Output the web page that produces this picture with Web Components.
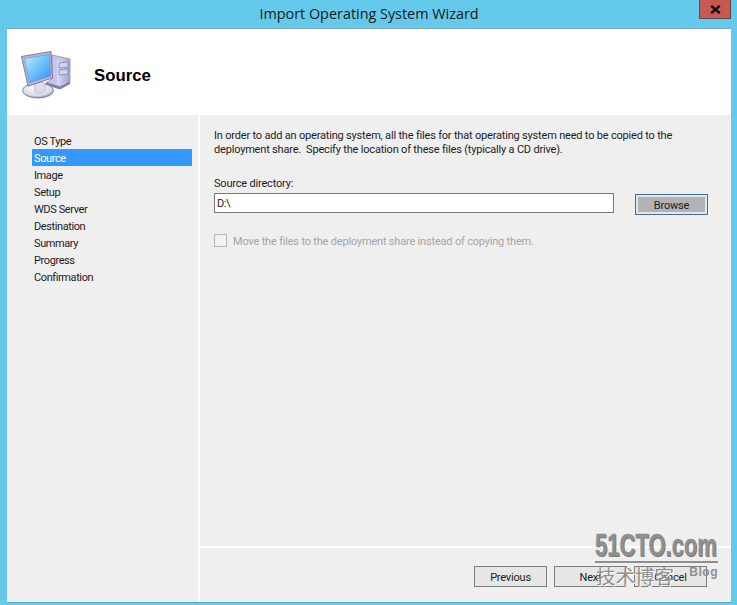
<!DOCTYPE html>
<html lang="en">
<head>
<meta charset="utf-8">
<title>Import Operating System Wizard</title>
<style>
  html, body { margin: 0; padding: 0; height: 100%; }
  body { background: #65c9eb; font-family: Roboto, "Liberation Sans", Arial, sans-serif; overflow: hidden; }
</style>
</head>
<body>
<wizard-window heading="Import Operating System Wizard">
  <wizard-header slot="header" heading="Source"></wizard-header>
  <wizard-nav slot="nav" items="OS Type,Source,Image,Setup,WDS Server,Destination,Summary,Progress,Confirmation" active="Source"></wizard-nav>
  <source-page slot="content"></source-page>
  <wizard-footer slot="footer"></wizard-footer>
</wizard-window>
<blog-watermark></blog-watermark>

<script>
// Native web components for the wizard dialog

class WizardWindow extends HTMLElement {
  constructor() {
    super();
    this.attachShadow({ mode: 'open' });
    this.shadowRoot.innerHTML = /*html*/`
      <style>
        :host {
          display: flex;
          flex-direction: column;
          width: 737px;
          height: 605px;
          box-sizing: border-box;
          padding: 0 6px 2px 7px;
          color: #000;
        }
        .titlebar {
          display: grid;
          grid-template-columns: 1fr auto 1fr;
          height: 28px;
          flex: none;
          border-bottom: 1px solid #7fa9b8;
        }
        .title {
          grid-column: 2;
          font: 14.4px/28px "Open Sans", "Liberation Sans", sans-serif;
          color: #1a1a1a;
          white-space: nowrap;
        }
        .close {
          grid-column: 3;
          justify-self: end;
          width: 30px;
          height: 18px;
          background: #c65a50;
          border: 1px solid #5a4a50;
          border-top: 0;
          display: flex;
          align-items: center;
          justify-content: center;
        }
        .body {
          flex: 1;
          display: flex;
          flex-direction: column;
          min-height: 0;
          border-bottom: 1px solid #4faecf;
        }
        .main {
          flex: 1;
          display: grid;
          grid-template-columns: 191px 1fr;
          grid-template-rows: 1fr 54px;
          gap: 0;
          min-height: 0;
          background: #fff;
        }
        .nav { grid-row: 1 / 3; background: #efefef; }
        .content { background: #efefef; margin-left: 2px; margin-bottom: 2px; }
        .footer { background: #efefef; margin-left: 2px; }
      </style>
      <div class="titlebar">
        <div class="title"></div>
        <div class="close">
          <svg width="11" height="9" viewBox="0 0 11 9"><path d="M1.2 .8 9.8 8.2M9.8 .8 1.2 8.2" stroke="#111" stroke-width="2.4" fill="none"/></svg>
        </div>
      </div>
      <div class="body">
        <slot name="header"></slot>
        <div class="main">
          <div class="nav"><slot name="nav"></slot></div>
          <div class="content"><slot name="content"></slot></div>
          <div class="footer"><slot name="footer"></slot></div>
        </div>
      </div>
    `;
    this.shadowRoot.querySelector('.title').textContent = this.getAttribute('heading');
  }
}

class WizardHeader extends HTMLElement {
  constructor() {
    super();
    this.attachShadow({ mode: 'open' });
    this.shadowRoot.innerHTML = /*html*/`
      <style>
        :host {
          display: flex;
          align-items: center;
          height: 86px;
          background: #fff;
          box-sizing: border-box;
          padding: 6px 0 0 12px;
        }
        svg { display: block; flex: none; }
        h1 {
          margin: 2px 0 0 23px;
          font: bold 16.8px "Liberation Sans", Arial, sans-serif;
          color: #000;
        }
      </style>
      <svg width="52" height="50" viewBox="0 0 52 50">
        <defs>
          <linearGradient id="scr" x1="0" y1="0" x2="1" y2="1">
            <stop offset="0" stop-color="#c4ecfd"/>
            <stop offset=".5" stop-color="#6cc2fb"/>
            <stop offset="1" stop-color="#3a8cf0"/>
          </linearGradient>
          <linearGradient id="tower" x1="0" y1="0" x2="1" y2="0">
            <stop offset="0" stop-color="#dcdcf6"/>
            <stop offset="1" stop-color="#9c9cd6"/>
          </linearGradient>
          <radialGradient id="base" cx=".45" cy=".35" r=".7">
            <stop offset="0" stop-color="#fff"/>
            <stop offset=".7" stop-color="#d9d9ea"/>
            <stop offset="1" stop-color="#77779f"/>
          </radialGradient>
        </defs>
        <!-- tower -->
        <path d="M33 5 51 9 51 32 41 38 27 33 33 29Z" fill="#c5c5ea" stroke="#7f7fb2" stroke-width=".7"/>
        <path d="M38 10 51 9 51 32 38 35Z" fill="url(#tower)"/>
        <path d="M40 13 49 12 49 17 40 18ZM40 20 49 19 49 24 40 25Z" fill="#d2d2f0" stroke="#6f6fa8" stroke-width=".6"/>
        <rect x="46.5" y="28" width="2.2" height="1.8" fill="#7fdc70"/>
        <path d="M27 32 41 36.5 51 31.5 51 34 41 39.5 27 35Z" fill="#7f7fb0"/>
        <!-- base -->
        <ellipse cx="19" cy="40.5" rx="15.5" ry="7.5" fill="url(#base)" stroke="#6f6f9c" stroke-width=".8"/>
        <path d="M15 31 26 33 26 40C24 44 18 44 16 42Z" fill="#dcdcec" stroke="#9a9ab8" stroke-width=".5"/>
        <!-- monitor -->
        <path d="M2.5 6.5 32 1.5 33.5 28 9 36Z" fill="#b9b9d6" stroke="#6f6f9c" stroke-width=".9"/>
        <path d="M5.5 8.5 30.5 4.5 31.5 26 10.5 32.5Z" fill="url(#scr)" stroke="#4f7fc4" stroke-width=".5"/>
      </svg>
      <h1></h1>
    `;
    this.shadowRoot.querySelector('h1').textContent = this.getAttribute('heading');
  }
}

class WizardNav extends HTMLElement {
  constructor() {
    super();
    this.attachShadow({ mode: 'open' });
    const active = this.getAttribute('active');
    const rows = this.getAttribute('items').split(',').map(item =>
      `<li class="${item === active ? 'active' : ''}">${item}</li>`).join('');
    this.shadowRoot.innerHTML = /*html*/`
      <style>
        :host { display: block; padding: 17px 6px 0 25px; }
        ul { list-style: none; margin: 0; padding: 0; }
        li {
          height: 17px;
          padding-left: 2px;
          font: 11px/19px Roboto, "Liberation Sans", Arial, sans-serif;
          letter-spacing: -.4px;
          color: #1c1c1c;
        }
        li.active { background: #3399ff; color: #fff; }
      </style>
      <ul>${rows}</ul>
    `;
  }
}

class SourcePage extends HTMLElement {
  constructor() {
    super();
    this.attachShadow({ mode: 'open' });
    this.shadowRoot.innerHTML = /*html*/`
      <style>
        :host {
          display: block;
          padding: 14px 22px 0 14px;
          font: 11px/14px Roboto, "Liberation Sans", Arial, sans-serif;
          letter-spacing: -.19px;
          color: #1c1c1c;
        }
        p { margin: 0 0 20px; width: 480px; }
        label { display: block; margin-bottom: 2px; }
        .row { display: flex; align-items: flex-start; gap: 21px; margin-bottom: 19px; }
        .input {
          width: 400px;
          height: 20px;
          box-sizing: border-box;
          background: #fff;
          border: 1px solid #7a7a7a;
          padding-left: 2px;
          font: 11px/19px Roboto, "Liberation Sans", Arial, sans-serif;
          letter-spacing: -.5px;
        }
        .row wizard-button { margin-top: 1px; }
        .check { display: flex; align-items: flex-start; gap: 6px; color: #a5a5a5; line-height: 15px; }
        .box {
          width: 13px;
          height: 13px;
          box-sizing: border-box;
          background: #f2f2f2;
          border: 1px solid #b5b5b5;
        }
      </style>
      <p>In order to add an operating system, all the files for that operating system need to be copied to the deployment share.&nbsp; Specify the location of these files (typically a CD drive).</p>
      <label>Source directory:</label>
      <div class="row">
        <div class="input">D:\\</div>
        <wizard-button focused>Browse</wizard-button>
      </div>
      <div class="check"><span class="box"></span><span>Move the files to the deployment share instead of copying them.</span></div>
    `;
  }
}

class WizardFooter extends HTMLElement {
  constructor() {
    super();
    this.attachShadow({ mode: 'open' });
    this.shadowRoot.innerHTML = /*html*/`
      <style>
        :host {
          display: flex;
          justify-content: flex-end;
          gap: 7px;
          padding: 18px 24px 0 0;
        }
      </style>
      <wizard-button>Previous</wizard-button>
      <wizard-button>Next</wizard-button>
      <wizard-button>Cancel</wizard-button>
    `;
  }
}

class WizardButton extends HTMLElement {
  constructor() {
    super();
    this.attachShadow({ mode: 'open' });
    this.shadowRoot.innerHTML = /*html*/`
      <style>
        :host {
          display: block;
          width: 73px;
          height: 21px;
          box-sizing: border-box;
          border: 1px solid #7d7d7d;
          background: #e6e6e6;
          text-align: center;
          font: 11px/22px Roboto, "Liberation Sans", Arial, sans-serif;
          letter-spacing: -.2px;
          color: #1c1c1c;
        }
        :host([focused]) {
          border: 1px solid #3f6f9c;
          background: #b3b3b3;
          box-shadow: inset 0 0 0 2px #e6e6e6;
        }
      </style>
      <slot></slot>
    `;
  }
}

class BlogWatermark extends HTMLElement {
  constructor() {
    super();
    this.attachShadow({ mode: 'open' });
    this.shadowRoot.innerHTML = /*html*/`
      <style>
        :host {
          position: absolute;
          left: 595px;
          top: 530px;
          width: 123px;
          color: #8f8f8f;
          pointer-events: none;
        }
        .brand {
          font: bold 31px/31px "Liberation Sans", Arial, sans-serif;
          white-space: nowrap;
          transform-origin: 0 0;
          transform: scaleX(.71);
          -webkit-text-stroke: .5px #8f8f8f;
          text-shadow: 1px 1px #6f6f6f;
        }
        .rule { height: 2px; background: #8f8f8f; }
        .sub { display: flex; justify-content: space-between; align-items: flex-start; margin-top: 1px; }
        .cn {
          font: 19.5px/24px "Noto Sans CJK SC", sans-serif;
          margin-left: 1px;
          text-shadow: 1px 1px #fff;
        }
        .en { font: bold 12px/14px "Liberation Sans", Arial, sans-serif; letter-spacing: .5px; margin-top: 1px; }
      </style>
      <div class="brand">51CTO.com</div>
      <div class="rule"></div>
      <div class="sub"><span class="cn">技术博客</span><span class="en">Blog</span></div>
    `;
  }
}

customElements.define('wizard-button', WizardButton);
customElements.define('wizard-window', WizardWindow);
customElements.define('wizard-header', WizardHeader);
customElements.define('wizard-nav', WizardNav);
customElements.define('source-page', SourcePage);
customElements.define('wizard-footer', WizardFooter);
customElements.define('blog-watermark', BlogWatermark);
</script>
</body>
</html>
